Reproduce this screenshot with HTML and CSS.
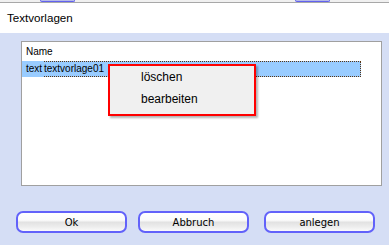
FILE: index.html
```html
<!DOCTYPE html>
<html lang="de">

<head>
    <meta charset="UTF-8">
    <meta name="viewport" content="width=device-width, initial-scale=1.0">
    <title>Textvorlagen</title>
    <link rel="stylesheet" href="styles.css">
</head>

<body>
    <div class="behind">
        <div class="behind-btn"></div>
        <div class="behind-btn second"></div>
    </div>

    <div class="titlebar">Textvorlagen</div>

    <div class="dialog">
        <div class="listbox">
            <div class="list-header">Name</div>
            <div class="list-row">
                <span class="cell-lead">text</span>
                <span class="cell-rest">textvorlage01</span>
            </div>
        </div>

        <div class="buttons">
            <button class="btn">Ok</button>
            <button class="btn">Abbruch</button>
            <button class="btn last">anlegen</button>
        </div>
    </div>

    <!-- context menu over the list -->
    <ul class="context-menu">
        <li>löschen</li>
        <li>bearbeiten</li>
    </ul>
</body>

</html>
```

FILE: styles.css
```css
html, body {
    margin: 0;
    padding: 0;
}

body {
    width: 389px;
    height: 245px;
    overflow: hidden;
    position: relative;
    background-color: #d5def5;
    font-family: "Liberation Sans", Arial, sans-serif;
    color: #000;
}

.behind {
    height: 2px;
    background-color: #f0f0f0;
    border-bottom: 1px solid #a8a8a8;
    display: flex;
    padding-left: 40px;
}

.behind-btn {
    width: 33px;
    height: 1px;
    background-color: #b6bae6;
    border: 1px solid #6262f0;
    border-top: none;
    border-radius: 0 0 4px 4px;
}

.behind-btn.second {
    margin-left: 220px;
}

.titlebar {
    height: 30px;
    line-height: 29px;
    padding-left: 7px;
    background-color: #fff;
    font-size: 11.6px;
}

.dialog {
    padding: 8px 0 0 16px;
}

.listbox {
    margin-left: 5px;
    width: 359px;
    height: 143px;
    background-color: #fff;
    border: 1px solid #a0a0a0;
    font-size: 10px;
}

.list-header {
    height: 19px;
    line-height: 19px;
    padding-left: 4px;
}

.list-row {
    display: flex;
    width: 339px;
    height: 16px;
    line-height: 16px;
    background-color: #99ccff;
}

.cell-lead {
    width: 18px;
    padding-left: 4px;
}

.cell-rest {
    flex: 1;
    height: 14px;
    line-height: 14px;
    border: 1px dotted #5a3512;
    border-left: none;
}

.buttons {
    display: flex;
    gap: 11px;
    margin-top: 25px;
}

.btn {
    width: 111px;
    height: 22px;
    padding: 0;
    border: 2px solid #6262fa;
    border-radius: 7px;
    background: linear-gradient(#ffffff 0%, #fbfbfb 40%, #e2e2e2 52%, #ececec 75%, #fafafa 100%);
    font-family: "DejaVu Sans", Verdana, sans-serif;
    font-size: 10px;
    color: #000;
}

.btn.last {
    margin-left: 4px;
}

.context-menu {
    position: absolute;
    left: 108px;
    top: 64px;
    width: 144px;
    margin: 0;
    padding: 0 0 4px 0;
    list-style: none;
    background-color: #f0f0f0;
    border: 2px solid #ff0000;
    box-shadow: 2px 2px 2px rgba(0, 0, 0, 0.3);
    font-size: 12px;
}

.context-menu li {
    height: 22px;
    line-height: 22px;
    padding-left: 31px;
}
```
